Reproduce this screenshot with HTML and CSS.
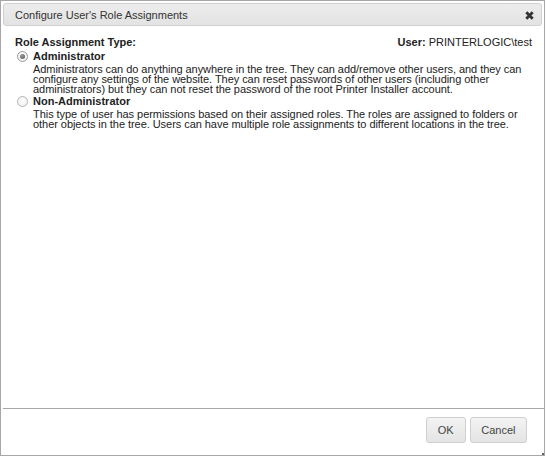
FILE: index.html
```html
<!DOCTYPE html>
<html>
<head>
<meta charset="utf-8">
<link rel="stylesheet" href="styles.css">
</head>
<body>
<div class="dialog">
  <div class="titlebar">
    <span class="title">Configure User's Role Assignments</span>
    <button class="close" aria-label="Close">
      <svg width="9" height="9" viewBox="0 0 9 9"><path d="M1.3 1.3 L7.7 7.7 M7.7 1.3 L1.3 7.7" stroke="#333" stroke-width="2.8" stroke-linecap="butt"/></svg>
    </button>
  </div>
  <div class="content">
    <div class="header-row">
      <span class="bold">Role Assignment Type:</span>
      <span><span class="bold">User:</span> PRINTERLOGIC\test</span>
    </div>
    <div class="options">
      <div class="option">
        <span class="radio checked"></span>
        <div class="option-text">
          <div class="label">Administrator</div>
          <div class="desc">Administrators can do anything anywhere in the tree. They can add/remove other users, and they can configure any settings of the website. They can reset passwords of other users (including other administrators) but they can not reset the password of the root Printer Installer account.</div>
        </div>
      </div>
      <div class="option">
        <span class="radio"></span>
        <div class="option-text">
          <div class="label">Non-Administrator</div>
          <div class="desc">This type of user has permissions based on their assigned roles. The roles are assigned to folders or other objects in the tree. Users can have multiple role assignments to different locations in the tree.</div>
        </div>
      </div>
    </div>
  </div>
  <div class="buttonpane">
    <button class="btn btn-ok">OK</button>
    <button class="btn">Cancel</button>
  </div>
  <span class="resize"></span>
</div>
</body>
</html>
```
FILE: styles.css
```css
html, body {
  margin: 0;
  padding: 0;
  background: #fff;
}
body {
  font-family: "Liberation Sans", Arial, sans-serif;
  font-size: 11px;
  color: #222;
}
.dialog {
  position: relative;
  box-sizing: border-box;
  width: 545px;
  height: 456px;
  border: 1px solid #a6a6a6;
  padding: 2px 2px 0 2px;
  display: flex;
  flex-direction: column;
  background: #fff;
}
.titlebar {
  box-sizing: border-box;
  height: 23px;
  border: 1px solid #d0d0d0;
  border-radius: 3px;
  background: linear-gradient(#ececec, #e3e3e3);
  display: flex;
  align-items: center;
  justify-content: space-between;
  padding: 1px 7px 0 11px;
}
.title {
  color: #333;
  font-size: 11px;
}
.close {
  border: 0;
  background: none;
  padding: 0;
  width: 9px;
  height: 9px;
  display: flex;
}
.content {
  flex: 1;
  padding: 12.3px 10px 0 12px;
}
.header-row {
  display: flex;
  justify-content: space-between;
  line-height: 9.7px;
}
.bold {
  font-weight: bold;
}
.options {
  margin-top: 2.1px;
  display: flex;
  flex-direction: column;
  gap: 1.5px;
}
.option {
  display: flex;
  align-items: flex-start;
}
.radio {
  box-sizing: border-box;
  width: 11px;
  height: 11px;
  margin: 0.5px 5px 0 2px;
  border-radius: 50%;
  border: 1px solid #b5b5b5;
  background: radial-gradient(circle at 50% 40%, #ffffff, #ececec);
  flex: none;
  display: flex;
  align-items: center;
  justify-content: center;
}
.radio.checked {
  border-color: #9a9a9a;
}
.radio.checked::after {
  content: "";
  width: 5px;
  height: 5px;
  border-radius: 50%;
  background: radial-gradient(circle at 40% 35%, #9a9a9a, #555);
}
.option-text {
  display: flex;
  flex-direction: column;
}
.label {
  font-weight: bold;
  line-height: 12.4px;
}
.desc {
  margin-top: 1.2px;
  line-height: 10px;
  letter-spacing: -0.05px;
}
.buttonpane {
  box-sizing: border-box;
  height: 47px;
  border-top: 1px solid #a6a6a6;
  margin-right: -2px;
  display: flex;
  justify-content: flex-end;
  align-items: flex-start;
  gap: 4px;
  padding: 8px 17px 0 0;
}
.btn {
  box-sizing: border-box;
  height: 26px;
  padding: 0 10.5px;
  border: 1px solid #cfcfcf;
  border-radius: 3px;
  background: linear-gradient(#f3f3f3, #e4e4e4);
  color: #444;
  font-family: "Liberation Sans", Arial, sans-serif;
  font-size: 11px;
}
.btn-ok {
  min-width: 40px;
}
.resize {
  position: absolute;
  right: 0;
  bottom: 0;
  width: 2px;
  height: 2px;
  background: #666;
}
```
